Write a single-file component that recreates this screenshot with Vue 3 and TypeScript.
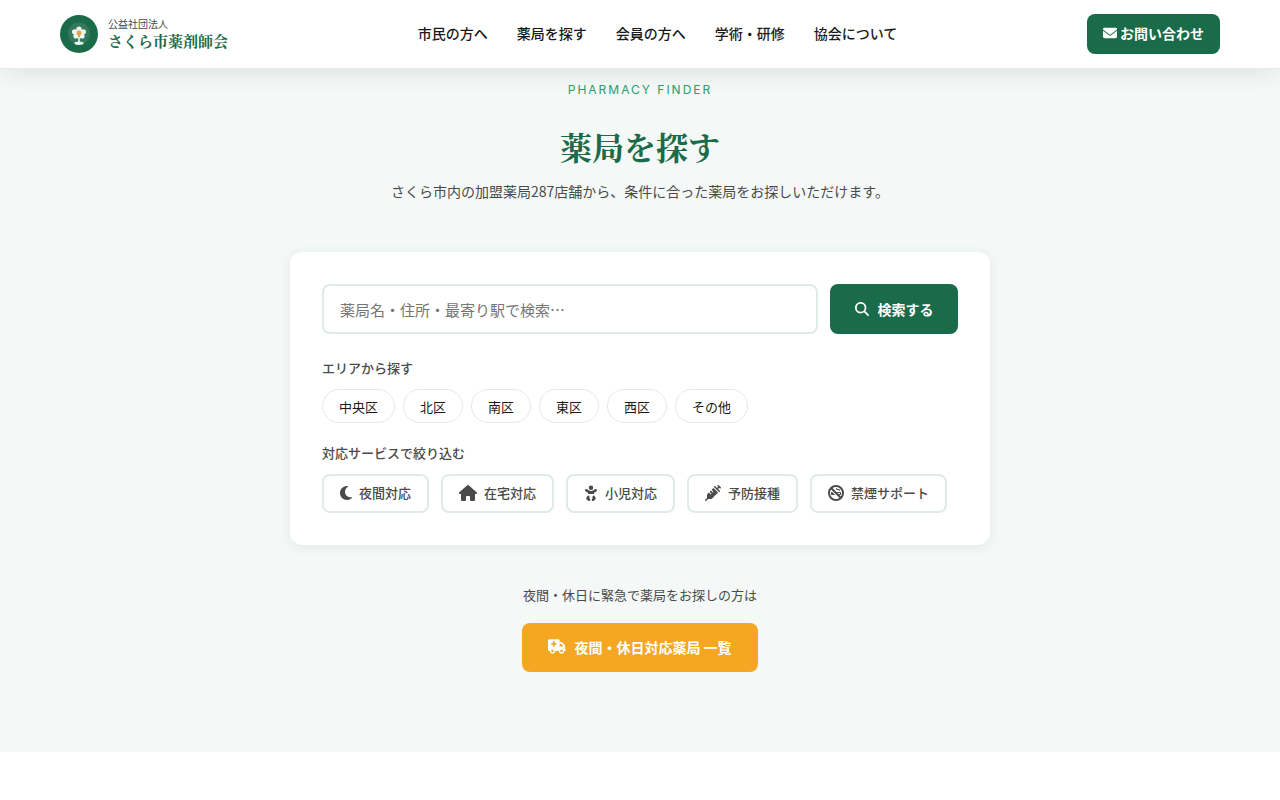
<script setup lang="ts">
import { ref } from 'vue'

interface Service {
  label: string
  width: number
  path: string
}

const navItems: string[] = ['市民の方へ', '薬局を探す', '会員の方へ', '学術・研修', '協会について']
const areas: string[] = ['中央区', '北区', '南区', '東区', '西区', 'その他']
const keyword = ref('')

/* width is the viewBox width; every icon is 512 units tall */
const services: Service[] = [
  {
    label: '夜間対応',
    width: 384,
    path: 'M223.5 32C100 32 0 132.3 0 256S100 480 223.5 480c60.6 0 115.5-24.2 155.8-63.4c5-4.9 6.3-12.5 3.1-18.7s-10.1-9.7-17-8.5c-9.8 1.7-19.8 2.6-30.1 2.6c-96.9 0-175.5-78.8-175.5-176c0-65.8 36-123.1 89.3-153.3c6.1-3.5 9.2-10.5 7.7-17.3s-7.3-11.9-14.3-12.5c-6.3-.5-12.6-.8-19-.8z',
  },
  {
    label: '在宅対応',
    width: 576,
    path: 'M575.8 255.5c0 18-15 32.1-32 32.1l-32 0 .7 160.2c0 2.7-.2 5.4-.5 8.1l0 16.2c0 22.1-17.9 40-40 40l-16 0c-1.1 0-2.2 0-3.3-.1c-1.4 .1-2.8 .1-4.2 .1L416 512l-24 0c-22.1 0-40-17.9-40-40l0-24 0-64c0-17.7-14.3-32-32-32l-64 0c-17.7 0-32 14.3-32 32l0 64 0 24c0 22.1-17.9 40-40 40l-24 0-31.9 0c-1.5 0-3-.1-4.5-.2c-1.2 .1-2.4 .2-3.6 .2l-16 0c-22.1 0-40-17.9-40-40l0-112c0-.9 0-1.9 .1-2.8l0-69.7-32 0c-18 0-32-14-32-32.1c0-9 3-17 10-24L266.4 8c7-7 15-8 22-8s15 2 21 7L564.8 231.5c8 7 12 15 11 24z',
  },
  {
    label: '小児対応',
    width: 448,
    path: 'M152 88a72 72 0 1 1 144 0A72 72 0 1 1 152 88zM39.7 144.5c13-17.9 38-21.8 55.9-8.8L131.8 162c26.8 19.5 59.1 30 92.2 30s65.4-10.5 92.2-30l36.2-26.4c17.9-13 42.9-9 55.9 8.8s9 42.9-8.8 55.9l-36.2 26.4c-13.6 9.9-28.1 18.2-43.3 25l0 36.3-192 0 0-36.3c-15.2-6.7-29.7-15.1-43.3-25L48.5 200.3c-17.9-13-21.8-38-8.8-55.9zm89.8 184.8l60.6 53-26 37.2 24.3 24.3c15.6 15.6 15.6 40.9 0 56.6s-40.9 15.6-56.6 0l-48-48C70 438.6 68.1 417 79.2 401.1l50.2-71.8zm128.5 53l60.6-53 50.2 71.8c11.1 15.9 9.2 37.5-4.5 51.2l-48 48c-15.6 15.6-40.9 15.6-56.6 0s-15.6-40.9 0-56.6L284 419.4l-26-37.2z',
  },
  {
    label: '予防接種',
    width: 512,
    path: 'M441 7l32 32 32 32c9.4 9.4 9.4 24.6 0 33.9s-24.6 9.4-33.9 0l-15-15L417.9 128l55 55c9.4 9.4 9.4 24.6 0 33.9s-24.6 9.4-33.9 0l-72-72L295 73c-9.4-9.4-9.4-24.6 0-33.9s24.6-9.4 33.9 0l55 55L422.1 56 407 41c-9.4-9.4-9.4-24.6 0-33.9s24.6-9.4 33.9 0zM210.3 155.7l61.1-61.1c.3 .3 .6 .7 1 1l16 16 56 56 56 56 16 16c.3 .3 .6 .6 1 1l-191 191c-10.5 10.5-24.7 16.4-39.6 16.4l-88.8 0L41 505c-9.4 9.4-24.6 9.4-33.9 0s-9.4-24.6 0-33.9l57-57 0-88.8c0-14.9 5.9-29.1 16.4-39.6l43.3-43.3 57 57c6.2 6.2 16.4 6.2 22.6 0s6.2-16.4 0-22.6l-57-57 41.4-41.4 57 57c6.2 6.2 16.4 6.2 22.6 0s6.2-16.4 0-22.6l-57-57z',
  },
  {
    label: '禁煙サポート',
    width: 512,
    path: 'M99.5 144.8L178.7 224l96 96 92.5 92.5C335.9 434.9 297.5 448 256 448C150 448 64 362 64 256c0-41.5 13.1-79.9 35.5-111.2zM333.3 288l-32-32 82.7 0 0 32-50.7 0zm32 32l34.7 0c8.8 0 16-7.2 16-16l0-64c0-8.8-7.2-16-16-16l-130.7 0L144.8 99.5C176.1 77.1 214.5 64 256 64c106 0 192 86 192 192c0 41.5-13.1 79.9-35.5 111.2L365.3 320zM256 512A256 256 0 1 0 256 0a256 256 0 1 0 0 512zM272 96c-8.8 0-16 7.2-16 16c0 26.5 21.5 48 48 48l32 0c8.8 0 16 7.2 16 16s7.2 16 16 16s16-7.2 16-16c0-26.5-21.5-48-48-48l-32 0c-8.8 0-16-7.2-16-16s-7.2-16-16-16zM229.5 320l-96-96L112 224c-8.8 0-16 7.2-16 16l0 64c0 8.8 7.2 16 16 16l117.5 0z',
  },
]
const selected = ref<string[]>([])

function toggle(label: string): void {
  selected.value = selected.value.includes(label)
    ? selected.value.filter((item) => item !== label)
    : [...selected.value, label]
}
</script>

<template>
  <div class="page">
    <header class="header">
      <a class="brand" href="#">
        <svg class="brand-mark" viewBox="0 0 38 38" aria-hidden="true">
          <circle cx="19" cy="19" r="19" fill="#1a6b4a" />
          <circle cx="19" cy="18.5" r="11" fill="#34795b" />
          <g fill="#eef7f3">
            <circle cx="19" cy="14.1" r="2.7" />
            <circle cx="23.4" cy="16.8" r="2.6" />
            <circle cx="22" cy="21" r="2.6" />
            <circle cx="16" cy="21" r="2.6" />
            <circle cx="14.6" cy="16.8" r="2.6" />
            <rect x="18.2" y="22" width="1.6" height="6" />
            <ellipse cx="19" cy="28.3" rx="4.6" ry="1.7" />
          </g>
          <path d="M16.6 17.4a2.4 2 0 0 1 4.8 0c0 1.6-1.4 3.6-2.4 4.4c-1-.8-2.4-2.8-2.4-4.4z" fill="#e8a33a" />
        </svg>
        <span class="brand-text">
          <span class="brand-sub">公益社団法人</span>
          <span class="brand-name">さくら市薬剤師会</span>
        </span>
      </a>
      <nav class="nav">
        <a v-for="item in navItems" :key="item" href="#">{{ item }}</a>
      </nav>
      <a class="contact" href="#">
        <svg class="contact-icon" viewBox="0 0 512 512" aria-hidden="true">
          <path fill="currentColor" d="M48 64C21.5 64 0 85.5 0 112c0 15.1 7.1 29.3 19.2 38.4L236.8 313.6c11.4 8.5 27 8.5 38.4 0L492.8 150.4c12.1-9.1 19.2-23.3 19.2-38.4c0-26.5-21.5-48-48-48L48 64zM0 176L0 384c0 35.3 28.7 64 64 64l384 0c35.3 0 64-28.7 64-64l0-208L294.4 339.2c-22.8 17.1-54 17.1-76.8 0L0 176z" />
        </svg>
        お問い合わせ
      </a>
    </header>

    <main class="finder">
      <p class="eyebrow">PHARMACY FINDER</p>
      <h1 class="title">薬局を探す</h1>
      <p class="lead">さくら市内の加盟薬局287店舗から、条件に合った薬局をお探しいただけます。</p>

      <form class="card" @submit.prevent>
        <div class="search-row">
          <input v-model="keyword" class="search-input" type="text" aria-label="薬局を検索" placeholder="薬局名・住所・最寄り駅で検索…" />
          <button class="search-button" type="submit">
            <svg class="search-icon" viewBox="0 0 512 512" aria-hidden="true">
              <path fill="currentColor" fill-rule="evenodd" d="M416 208c0 45.9-14.9 88.3-40 122.7L502.6 457.4c12.5 12.5 12.5 32.8 0 45.3s-32.8 12.5-45.3 0L330.7 376c-34.4 25.2-76.8 40-122.7 40C93.1 416 0 322.9 0 208S93.1 0 208 0S416 93.1 416 208zM208 352a144 144 0 1 0 0-288 144 144 0 1 0 0 288z" />
            </svg>
            検索する
          </button>
        </div>

        <h2 class="group-title">エリアから探す</h2>
        <div class="areas">
          <button v-for="area in areas" :key="area" class="area" type="button">{{ area }}</button>
        </div>

        <h2 class="group-title">対応サービスで絞り込む</h2>
        <div class="services">
          <button
            v-for="service in services"
            :key="service.label"
            class="service"
            type="button"
            :aria-pressed="selected.includes(service.label)"
            @click="toggle(service.label)"
          >
            <svg class="service-icon" :viewBox="`0 0 ${service.width} 512`" aria-hidden="true">
              <path fill="currentColor" fill-rule="evenodd" :d="service.path" />
            </svg>
            {{ service.label }}
          </button>
        </div>
      </form>

      <p class="urgent-text">夜間・休日に緊急で薬局をお探しの方は</p>
      <a class="urgent-link" href="#">
        <svg class="urgent-icon" viewBox="0 0 640 512" aria-hidden="true">
          <path fill="currentColor" fill-rule="evenodd" d="M0 48C0 21.5 21.5 0 48 0L368 0c26.5 0 48 21.5 48 48l0 48 50.7 0c17 0 33.3 6.7 45.3 18.7L589.3 192c12 12 18.7 28.3 18.7 45.3l0 18.7 0 32 0 64c17.7 0 32 14.3 32 32s-14.3 32-32 32l-32 0c0 53-43 96-96 96s-96-43-96-96l-128 0c0 53-43 96-96 96s-96-43-96-96l-16 0c-26.5 0-48-21.5-48-48L0 48zM416 256l128 0 0-18.7L466.7 160 416 160l0 96zM160 464a48 48 0 1 0 0-96 48 48 0 1 0 0 96zm368-48a48 48 0 1 0 -96 0 48 48 0 1 0 96 0zM176 80l0 48-48 0c-8.8 0-16 7.2-16 16l0 32c0 8.8 7.2 16 16 16l48 0 0 48c0 8.8 7.2 16 16 16l32 0c8.8 0 16-7.2 16-16l0-48 48 0c8.8 0 16-7.2 16-16l0-32c0-8.8-7.2-16-16-16l-48 0 0-48c0-8.8-7.2-16-16-16l-32 0c-8.8 0-16 7.2-16 16z" />
        </svg>
        夜間・休日対応薬局 一覧
      </a>
    </main>
  </div>
</template>

<style>
body {
  margin: 0;
  background: #fff;
}
</style>

<style scoped>
.page {
  font-family: "Noto Sans CJK JP", sans-serif;
  color: #1a1a1a;
}
.page * {
  box-sizing: border-box;
}
a {
  color: inherit;
  text-decoration: none;
}
button,
input {
  font-family: inherit;
}
button {
  cursor: pointer;
}
svg {
  display: block;
  flex: none;
}

.header {
  position: relative;
  z-index: 1;
  display: flex;
  align-items: center;
  justify-content: space-between;
  height: 68px;
  padding: 0 60px;
  background: #fff;
  box-shadow: 0 1px 0 #e6ebe9, 0 8px 24px -4px rgba(0, 0, 0, 0.1);
}
.brand {
  display: flex;
  align-items: center;
  gap: 10px;
}
.brand-mark {
  width: 38px;
  height: 38px;
}
.brand-text {
  display: flex;
  flex-direction: column;
}
.brand-sub {
  font-size: 10px;
  line-height: 14px;
  color: #4a4a4a;
}
.brand-name {
  font-family: "Noto Serif CJK JP", "Noto Serif JP", serif;
  font-size: 15px;
  font-weight: 700;
  line-height: 20px;
  color: #1a6b4a;
}
.nav {
  display: flex;
  gap: 29px;
  padding-bottom: 2px;
  font-size: 14px;
  font-weight: 500;
  line-height: 20px;
}
.contact {
  display: flex;
  align-items: center;
  gap: 3px;
  height: 40px;
  padding: 0 16px 2px;
  border-radius: 8px;
  background: #1a6b4a;
  color: #fff;
  font-size: 14px;
  font-weight: 700;
}
.contact-icon {
  width: 14px;
  height: 14px;
}

.finder {
  display: flex;
  flex-direction: column;
  align-items: center;
  padding: 12px 20px 80px;
  background: #f4f8f7;
}
.eyebrow {
  margin: 0;
  font-family: Inter, sans-serif;
  font-size: 12px;
  font-weight: 400;
  line-height: 20px;
  letter-spacing: 2px;
  color: #2d9d6b;
}
.title {
  margin: 22px 0 9px;
  font-family: "Noto Serif CJK JP", "Noto Serif JP", serif;
  font-size: 32px;
  font-weight: 700;
  line-height: 48px;
  color: #1a6b4a;
}
.lead {
  margin: 0 0 49px;
  font-size: 14px;
  line-height: 24px;
  color: #4a4a4a;
}

.card {
  width: 100%;
  max-width: 700px;
  padding: 32px;
  border-radius: 12px;
  background: #fff;
  box-shadow: 0 2px 12px rgba(0, 0, 0, 0.07);
}
.search-row {
  display: flex;
  gap: 12px;
  margin-bottom: 24px;
}
.search-input {
  flex: 1;
  min-width: 0;
  height: 50px;
  padding: 0 16px;
  border: 2px solid #e0ebe8;
  border-radius: 8px;
  background: #fff;
  font-size: 15px;
  color: #1a1a1a;
}
.search-input::placeholder {
  color: #757575;
}
.search-button {
  display: flex;
  align-items: center;
  justify-content: center;
  gap: 9px;
  min-width: 128px;
  padding: 0 24px;
  border: 0;
  border-radius: 8px;
  background: #1a6b4a;
  color: #fff;
  font-size: 14px;
  font-weight: 700;
}
.search-icon {
  width: 14px;
  height: 14px;
}
.group-title {
  margin: 0 0 11px;
  font-size: 13px;
  font-weight: 500;
  line-height: 20px;
  color: #4a4a4a;
}
.areas {
  display: flex;
  flex-wrap: wrap;
  gap: 8px;
  margin-bottom: 20px;
}
.area {
  height: 34px;
  padding: 0 16px;
  border: 1px solid #e4e9e7;
  border-radius: 17px;
  background: #fff;
  font-size: 13px;
  color: #1a1a1a;
}
.services {
  display: flex;
  flex-wrap: wrap;
  gap: 12px;
}
.service {
  display: flex;
  align-items: center;
  gap: 7px;
  height: 39px;
  padding: 0 16px 2px;
  border: 2px solid #e0ebe8;
  border-radius: 8px;
  background: #fff;
  font-size: 13px;
  font-weight: 500;
  color: #4a4a4a;
}
.service-icon {
  height: 16px;
}

.urgent-text {
  margin: 40px 0 18px;
  font-size: 13px;
  line-height: 20px;
  color: #4a4a4a;
}
.urgent-link {
  display: flex;
  align-items: center;
  justify-content: center;
  gap: 8px;
  min-width: 236px;
  height: 49px;
  padding: 0 24px 2px;
  border-radius: 8px;
  background: #f5a623;
  color: #fff;
  font-size: 14px;
  font-weight: 700;
}
.urgent-icon {
  width: 18px;
  height: 15px;
}
</style>
